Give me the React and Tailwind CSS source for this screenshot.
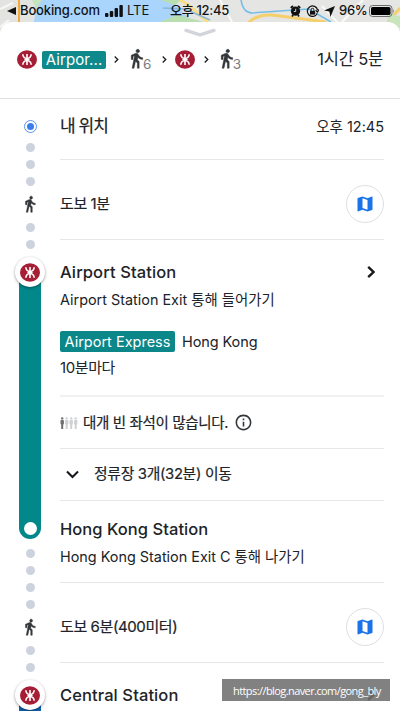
import React from 'react';
import clsx from 'clsx';
import { MdMap, MdInfoOutline } from 'react-icons/md';

const MapBackdrop = () => (
    <svg className="absolute inset-0" width="400" height="36" viewBox="0 0 400 36" fill="none">
        <rect width="400" height="36" fill="#e5e5e3" />
        <path d="M39 0H172L205 36H30z" fill="#a9d4fb" />
        <path d="M0 0H35L28 36H0z" fill="#e3e4df" />
        <path d="M32 0H42L36 9z" fill="#c5e3bd" />
        <path d="M160 0H181L175 5z M160 22L177 15L204 22z" fill="#b9dfb0" />
        <path d="M19 0V36" stroke="#f2a83c" strokeWidth="2" />
        <path d="M0 9L13 3M0 27L9 20" stroke="#f7f7f5" strokeWidth="2" />
        <path d="M180 0Q190 5 198 14L208 22" stroke="#fadc83" strokeWidth="3" />
        <path d="M163 8L185 9L210 20" stroke="#86b6da" strokeWidth="1.5" />
        <path d="M241 0Q243 13 252 13L309 9L331 22" stroke="#74bde8" strokeWidth="1.5" />
        <path d="M248 23Q257 14 272 15L326 22M388 22L400 8" stroke="#f5cf6b" strokeWidth="3" />
        <path d="M322 6L341 26M342 22L363 0M220 0L232 22" stroke="#fafafa" strokeWidth="2" />
        <path d="M385 8Q393 17 400 16V28H390z" fill="#c8e5bd" />
    </svg>
);

const StatusBar = () => (
    <div className="relative flex h-[22px] items-center text-[13px] font-medium text-[#101418]">
        <svg className="ml-[7px]" width="9" height="10" viewBox="0 0 9 10">
            <path d="M9 1V9L0 5z" fill="#111" />
        </svg>
        <span className="ml-[4px] w-[80px] whitespace-nowrap tracking-[-0.15px]">Booking.com</span>
        <svg className="ml-[5px]" width="18" height="12" viewBox="0 0 18 12" fill="#111">
            <rect y="8" width="3.4" height="4" rx="1" />
            <rect x="4.8" y="6" width="3.4" height="6" rx="1" />
            <rect x="9.6" y="3" width="3.4" height="9" rx="1" />
            <rect x="14.4" y="0" width="3.4" height="12" rx="1" />
        </svg>
        <span className="ml-[4px] w-[43px] font-normal">LTE</span>
        <span className="w-[62px] whitespace-nowrap tracking-[-0.3px]">오후 12:45</span>
        <svg className="ml-[58px]" width="11" height="12" viewBox="0 0 11 12" fill="none" stroke="#111">
            <circle cx="5.5" cy="6.2" r="4.6" fill="#111" stroke="none" />
            <path d="M.8 3L3 1M10.2 3L8 1M2 11.4L3 10M9 11.4L8 10" strokeWidth="1.8" />
            <path d="M5.7 3.8V6.5H3.8" stroke="#e5e5e3" strokeWidth=".9" />
        </svg>
        <svg className="ml-[5px]" width="13" height="13" viewBox="0 0 13 13" fill="none" stroke="#111">
            <path d="M11.6 5A5.2 5.2 0 1 0 11.2 8.5" strokeWidth="1.2" />
            <path d="M9.6 5.2L11.6 7L12.8 4.5" strokeWidth="1.2" />
            <rect x="4" y="6" width="5" height="3.6" fill="#111" stroke="none" />
            <path d="M5.1 6V4.7A1.4 1.4 0 0 1 7.9 4.7V6" />
        </svg>
        <svg className="ml-[5px]" width="11" height="11" viewBox="0 0 11 11">
            <path d="M11 0L6.4 11L5.4 5.6L0 4.6z" fill="#111" />
        </svg>
        <span className="ml-[4px] w-[30px] whitespace-nowrap tracking-[-0.3px]">96%</span>
        <svg width="27" height="12" viewBox="0 0 27 12">
            <rect x=".5" y=".5" width="22.5" height="11" rx="3" fill="none" stroke="#6c6c6c" />
            <rect x="2" y="2" width="19.5" height="8" rx="1.6" fill="#000" />
            <path d="M24.3 4Q26 6 24.3 8z" fill="#6c6c6c" />
        </svg>
    </div>
);

const MtrLogo = () => (
    <svg className="shrink-0" width="20" height="19" viewBox="0 0 20 19" fill="none">
        <ellipse cx="10" cy="9.5" rx="10" ry="9.3" fill="#a61e36" />
        <g stroke="#fff" strokeWidth="1.6">
            <path d="M10 4V15" />
            <path d="M7.4 9.5H12.6" strokeWidth="1.2" />
            <path d="M5.8 4.2C6 6.8 7.4 8.3 10 8.5C12.6 8.3 14 6.8 14.2 4.2" />
            <path d="M5.8 14.8C6 12.2 7.4 10.7 10 10.5C12.6 10.7 14 12.2 14.2 14.8" />
        </g>
    </svg>
);

const Chevron = ({ className, size = 7, width = 1.8 }) => (
    <svg className={clsx('shrink-0', className)} width={size * 0.7} height={size} viewBox="0 0 7 10" fill="none">
        <path d="M1 .8L5.4 5L1 9.2" stroke="#16181b" strokeWidth={width} />
    </svg>
);

const Walker = ({ size, className }) => (
    <svg className={clsx('shrink-0', className)} width={size} height={size} viewBox="0 0 24 24" fill="#33373a" stroke="#33373a" strokeWidth=".6">
        <path d="M13.5 5.5c1.1 0 2-.9 2-2s-.9-2-2-2-2 .9-2 2 .9 2 2 2zM9.8 8.9L7 23h2.1l1.8-8 2.1 2v6h2v-7.5l-2.1-2 .6-3C14.8 12 16.8 13 19 13v-2c-1.9 0-3.5-1-4.3-2.4l-1-1.6c-.4-.6-1-1-1.7-1-.3 0-.5.1-.8.1L6 8.3V13h2V9.6l1.8-.7z" />
    </svg>
);

const WalkStep = ({ minutes }) => (
    <div className="flex">
        <Walker size={21} />
        <span className="-ml-[4px] mt-[8px] text-[13.5px] leading-[16px] text-[#777b80]">{minutes}</span>
    </div>
);

const Summary = () => (
    <div className="flex h-[77px] shrink-0 flex-col border-b border-[#dfe0e2]">
        <svg className="mx-auto mt-[6px] shrink-0" width="32" height="10" viewBox="0 0 32 10" fill="none">
            <path d="M2 2.4L16 6.8L30 2.4" stroke="#d3d5da" strokeWidth="3.4" strokeLinecap="round" strokeLinejoin="round" />
        </svg>
        <div className="mt-[10px] flex h-[23px] items-center pl-[17px] pr-[17px]">
            <MtrLogo />
            <span className="ml-[5px] h-[18px] w-[64px] rounded-[2px] bg-[#0f898b] text-center text-[15px] leading-[18px] tracking-[0.1px] text-white">Airpor...</span>
            <Chevron className="ml-[8px]" />
            <div className="ml-[7px] w-[34px]"><WalkStep minutes={6} /></div>
            <Chevron className="ml-[2px]" />
            <div className="ml-[8px]"><MtrLogo /></div>
            <Chevron className="ml-[9px]" />
            <div className="ml-[7px]"><WalkStep minutes={3} /></div>
            <span className="ml-auto whitespace-nowrap text-[16.5px] tracking-[-0.2px] text-[#202327]">1시간 5분</span>
        </div>
    </div>
);

const Dots = ({ count, className }) => (
    <div className={clsx('flex flex-col gap-2', className)}>
        {Array.from({ length: count }, (_, i) => (
            <div key={i} className="size-[9px] rounded-full bg-[#cdd2df]" />
        ))}
    </div>
);

const StationBadge = () => (
    <div className="relative z-10 mt-[8.5px] flex size-[30px] shrink-0 items-center justify-center rounded-full bg-white shadow-[0_1px_3px_rgba(0,0,0,0.4)]">
        <MtrLogo />
    </div>
);

const Rail = () => (
    <div className="flex w-[60px] shrink-0 flex-col items-center pt-[21px]">
        <div className="flex size-[13px] shrink-0 items-center justify-center rounded-full border border-[#5b93ee]">
            <div className="size-[7px] rounded-full bg-[#3b7ded]" />
        </div>
        <Dots count={3} className="mt-[9.5px]" />
        <Walker className="mt-[9.5px]" size={18} />
        <Dots count={2} className="mt-[9.5px]" />
        <StationBadge />
        <div className="-mt-[15px] flex h-[267px] w-[22px] shrink-0 items-end justify-center rounded-b-full bg-[#02888b] pb-[4px]">
            <div className="size-[13px] rounded-full bg-white" />
        </div>
        <Dots count={4} className="mt-[9.5px]" />
        <Walker className="mt-[9.5px]" size={18} />
        <Dots count={2} className="mt-[9.5px]" />
        <StationBadge />
        <div className="-mt-[15px] h-[30px] w-[22px] shrink-0 bg-[#1160ac]" />
    </div>
);

const Row = ({ className, children }) => (
    <div className={clsx('shrink-0 border-[#e6e7e9]', className)}>{children}</div>
);

const WalkRow = ({ children }) => (
    <Row className="flex h-[80px] items-center justify-between border-b pt-[9px]">
        <span className="text-[15px] tracking-[-0.4px] [-webkit-text-stroke:0.2px]">{children}</span>
        <div className="flex size-[38px] items-center justify-center rounded-full border border-[#dddfe3]">
            <MdMap className="text-[#1a73e8]" size={20} />
        </div>
    </Row>
);

const Crowd = () => (
    <svg className="shrink-0" width="18" height="12" viewBox="0 0 18 12">
        {[0, 1, 2, 3].map((i) => (
            <g key={i} fill={i === 0 ? '#6d7073' : '#d0d1d3'}>
                <circle cx={2.2 + i * 4.5} cy="1.4" r="1.2" />
                <rect x={0.5 + i * 4.5} y="3" width="3.4" height="4.6" rx=".8" />
                <rect x={1.2 + i * 4.5} y="7" width="2" height="5" />
            </g>
        ))}
    </svg>
);

const Steps = () => (
    <div className="flex w-[324px] flex-col whitespace-nowrap text-[#202327]">
        <Row className="flex h-[61px] items-center justify-between border-b pb-[4px]">
            <span className="text-[17px] tracking-[-0.9px] [-webkit-text-stroke:0.2px]">내 위치</span>
            <span className="text-[14.5px]">오후 12:45</span>
        </Row>
        <WalkRow>도보 1분</WalkRow>
        <Row className="h-[157px] border-b-2 border-[#f0f1f2] pt-[20px]">
            <div className="flex h-[24px] items-center justify-between">
                <span className="text-[16.5px] font-medium tracking-[0.1px]">Airport Station</span>
                <Chevron className="mr-[9px]" size={12} width={2} />
            </div>
            <div className="mt-[6px] h-[20px] text-[14.4px] leading-[20px]">Airport Station Exit 통해 들어가기</div>
            <div className="mt-[21px] flex h-[21px] items-center text-[14.5px]">
                <span className="h-[21px] w-[115px] rounded-[2px] bg-[#0b8789] text-center leading-[21px] text-white">Airport Express</span>
                <span className="ml-[7px] tracking-[-0.1px]">Hong Kong</span>
            </div>
            <div className="mt-[6px] h-[20px] text-[15px] leading-[20px] tracking-[-0.4px]">10분마다</div>
        </Row>
        <Row className="flex h-[52px] items-center border-b">
            <Crowd />
            <span className="ml-[5px] w-[146px] text-[14.5px] tracking-[-0.33px] [-webkit-text-stroke:0.2px]">대개 빈 좌석이 많습니다.</span>
            <MdInfoOutline className="ml-[5px] text-[#33373a]" size={19} />
        </Row>
        <Row className="flex h-[52px] items-center border-b">
            <svg className="ml-[6px]" width="13" height="9" viewBox="0 0 13 9" fill="none">
                <path d="M1 1.5L6.5 7L12 1.5" stroke="#16181b" strokeWidth="2.1" />
            </svg>
            <span className="ml-[15px] text-[14.8px] tracking-[-0.3px] [-webkit-text-stroke:0.2px]">정류장 3개(32분) 이동</span>
        </Row>
        <Row className="h-[82px] border-b pt-[16px]">
            <div className="text-[16.5px] font-medium leading-[24px] tracking-[0.05px]">Hong Kong Station</div>
            <div className="mt-[6px] text-[14.4px] leading-[20px]">Hong Kong Station Exit C 통해 나가기</div>
        </Row>
        <WalkRow>도보 6분(400미터)</WalkRow>
        <div className="flex h-[64px] items-center justify-between">
            <span className="text-[16.5px] font-medium tracking-[0.1px]">Central Station</span>
            <Chevron className="mr-[9px]" size={12} width={2} />
        </div>
    </div>
);

export default () => (
    <div className="relative h-[711px] w-[400px] overflow-hidden bg-white font-['Inter','Noto_Sans_CJK_KR',sans-serif]">
        <MapBackdrop />
        <StatusBar />
        <div className="relative flex h-[689px] flex-col overflow-hidden rounded-t-[12px] bg-white">
            <Summary />
            <div className="flex">
                <Rail />
                <Steps />
            </div>
        </div>
        <div className="absolute left-[222px] top-[679px] h-[22px] w-[168px] whitespace-nowrap bg-[#6f6f6f]/88 pl-[11px] font-['Open_Sans',sans-serif] text-[11px] leading-[23px] tracking-[-0.58px] text-white">
            https://blog.naver.com/gong_bly
        </div>
    </div>
);
